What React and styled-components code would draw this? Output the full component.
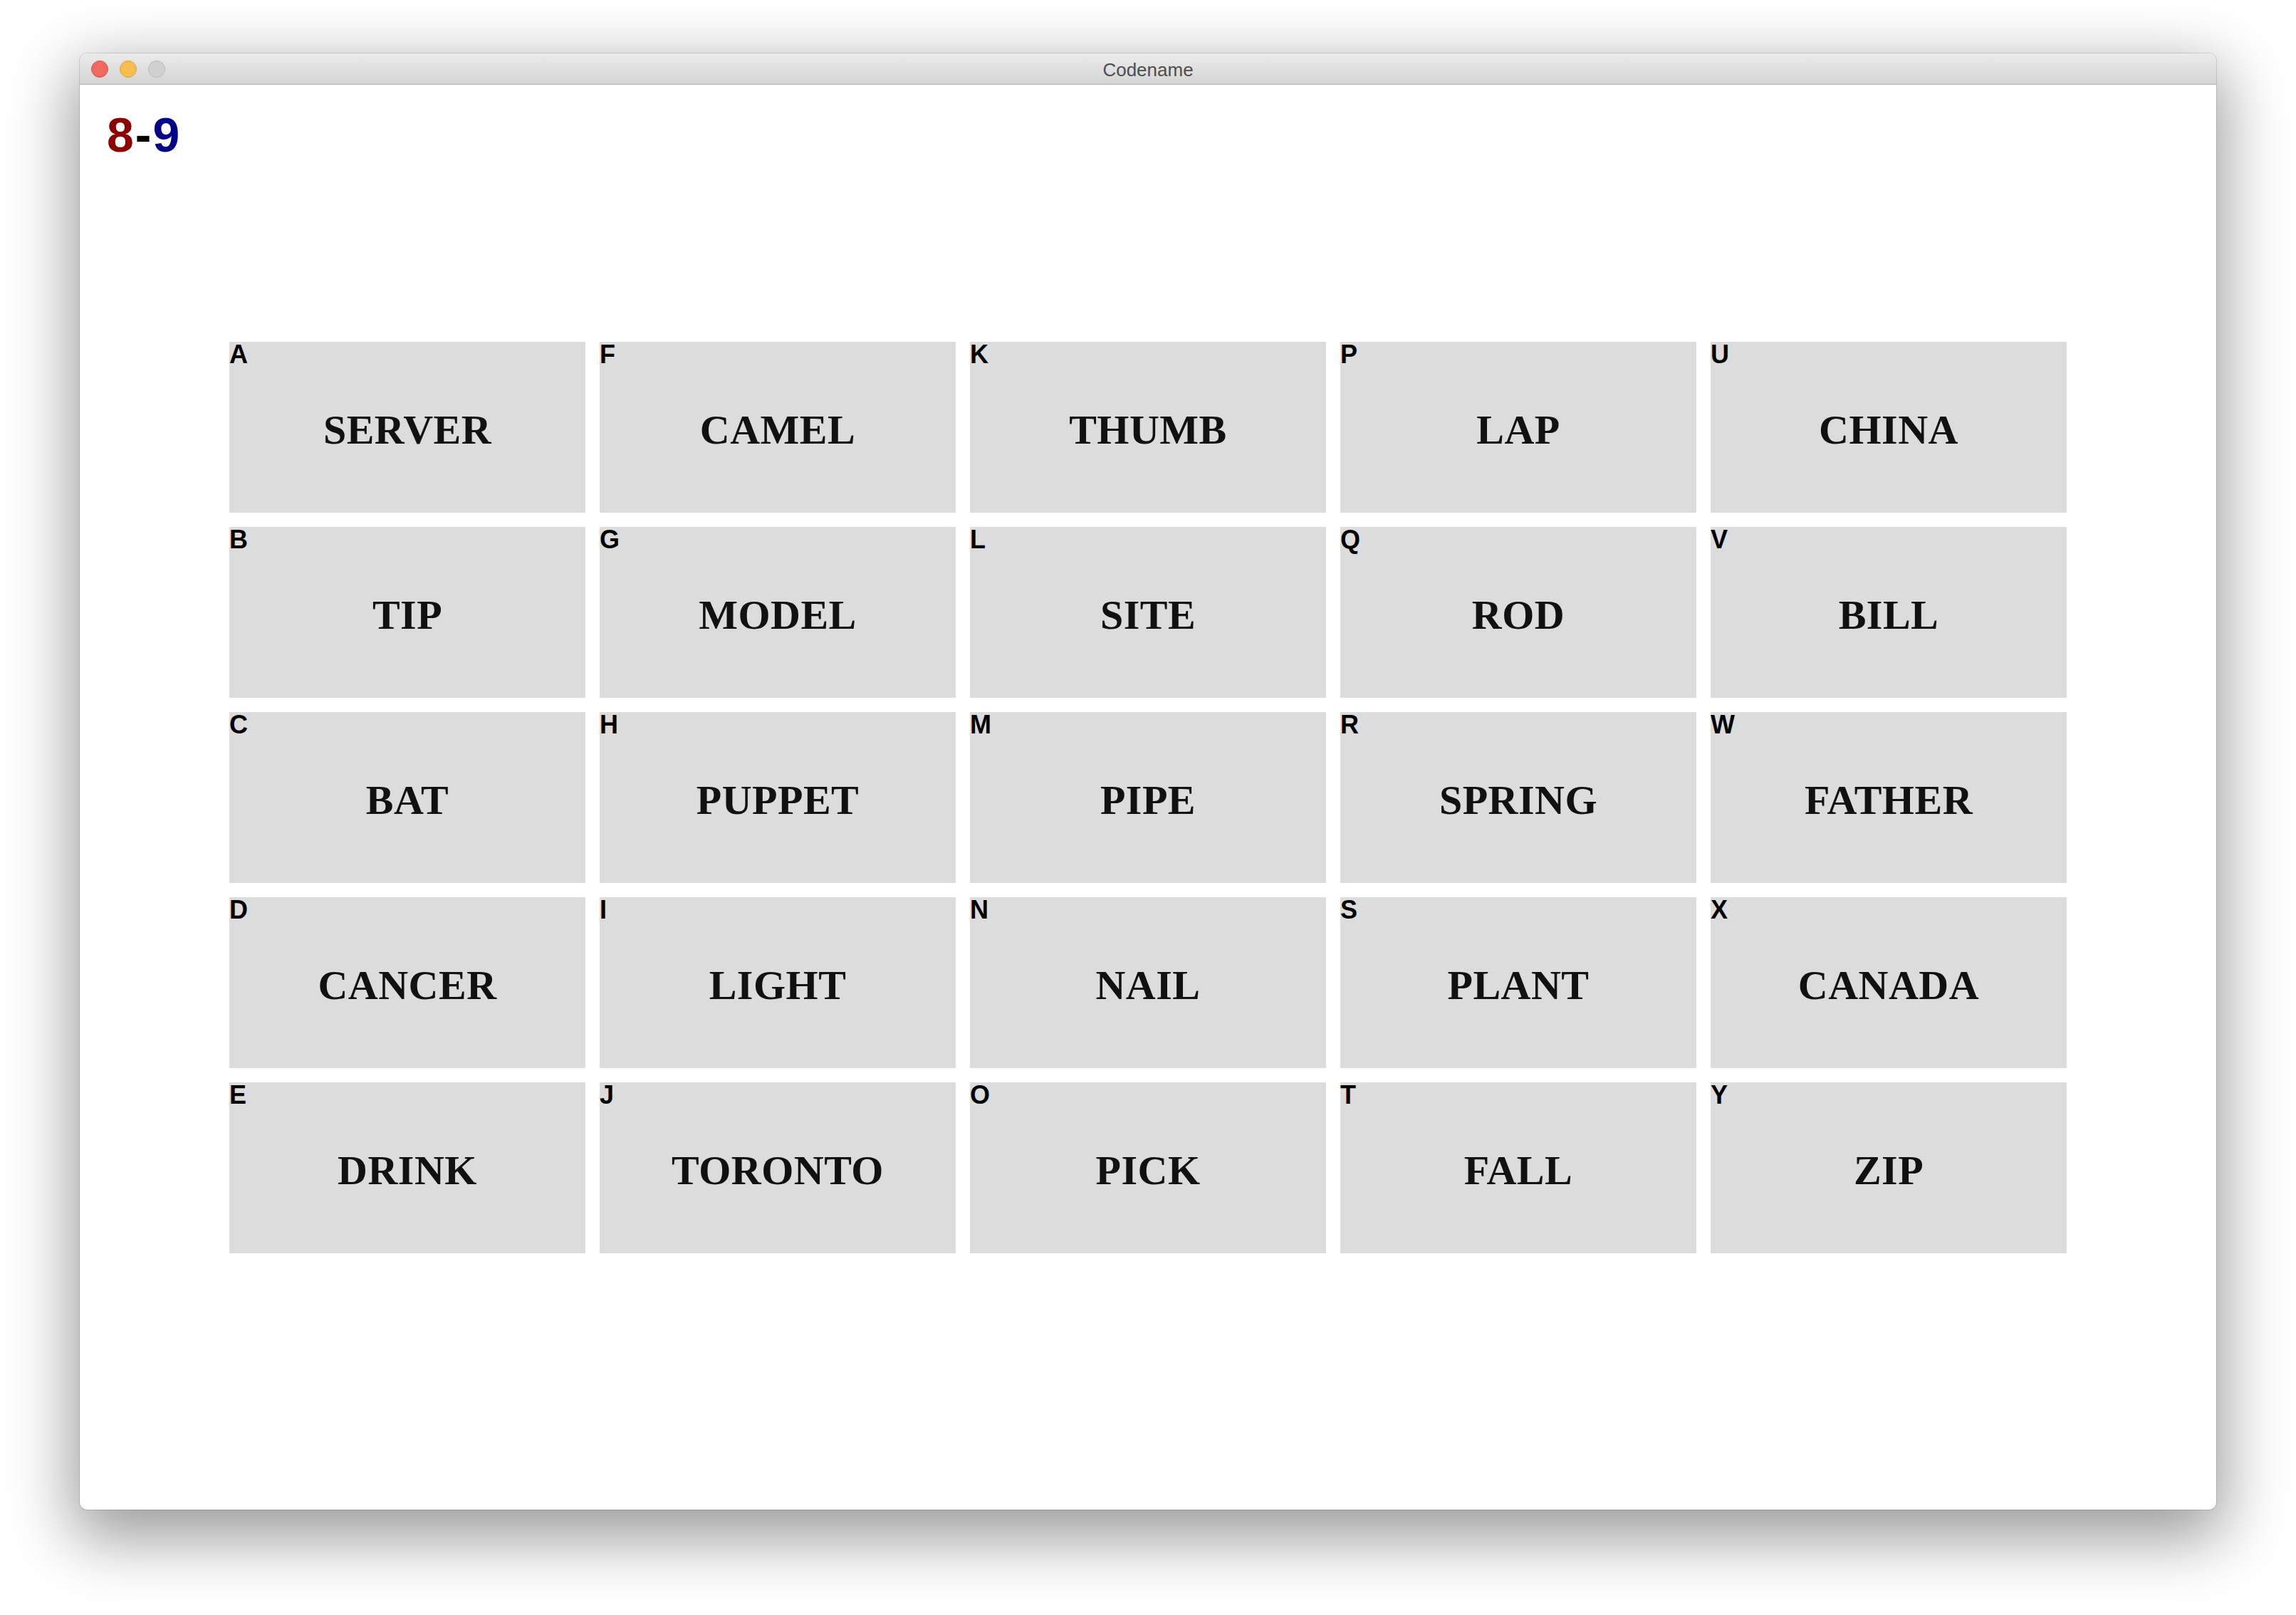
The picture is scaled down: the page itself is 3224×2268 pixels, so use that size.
import React from 'react';
import styled, { createGlobalStyle } from 'styled-components';

const words = [
	['A', 'SERVER'], ['B', 'TIP'], ['C', 'BAT'], ['D', 'CANCER'], ['E', 'DRINK'],
	['F', 'CAMEL'], ['G', 'MODEL'], ['H', 'PUPPET'], ['I', 'LIGHT'], ['J', 'TORONTO'],
	['K', 'THUMB'], ['L', 'SITE'], ['M', 'PIPE'], ['N', 'NAIL'], ['O', 'PICK'],
	['P', 'LAP'], ['Q', 'ROD'], ['R', 'SPRING'], ['S', 'PLANT'], ['T', 'FALL'],
	['U', 'CHINA'], ['V', 'BILL'], ['W', 'FATHER'], ['X', 'CANADA'], ['Y', 'ZIP'],
];

const GlobalStyle = createGlobalStyle`
	html, body {
		margin: 0;
		padding: 0;
		background: #ffffff;
	}
	* {
		box-sizing: border-box;
	}
`;

const App = () => {
	return (
		<>
			<GlobalStyle />
			<Desktop>
				<Window>
					<TitleBar>
						<Lights>
							<Light color="#ee6a5f" edge="#d5544a" />
							<Light color="#f6be4f" edge="#d9a33c" />
							<Light color="#d0d0d0" edge="#b9b9b9" />
						</Lights>
						<Title>Codename</Title>
					</TitleBar>
					<Content>
						<Score>
							<Team color="#8b0000">8</Team>
							<Dash>-</Dash>
							<Team color="#000088">9</Team>
						</Score>
						<Board>
							{words.map(([letter, word]) => (
								<Card key={letter}>
									<Letter>{letter}</Letter>
									<Word>{word}</Word>
								</Card>
							))}
						</Board>
					</Content>
				</Window>
			</Desktop>
		</>
	);
};

export default App;

const Desktop = styled.div`
	width: 3224px;
	height: 2268px;
	padding: 75px 0 0 112px;
	background: #ffffff;
	overflow: hidden;
`;

const Window = styled.div`
	width: 3000px;
	height: 2045px;
	display: flex;
	flex-direction: column;
	background: #ffffff;
	border-radius: 10px;
	overflow: hidden;
	box-shadow: 0 0 0 1px rgba(0, 0, 0, 0.12), 0 30px 90px 10px rgba(0, 0, 0, 0.4);
`;

const TitleBar = styled.div`
	position: relative;
	height: 44px;
	flex: none;
	display: flex;
	align-items: center;
	justify-content: center;
	padding-top: 3px;
	background: linear-gradient(#ebebeb, #d5d5d5);
	border-bottom: 1px solid #b4b4b4;
`;

const Lights = styled.div`
	position: absolute;
	left: 16px;
	top: 10px;
	display: flex;
	gap: 16px;
`;

const Light = styled.span`
	width: 24px;
	height: 24px;
	border-radius: 50%;
	background: ${({ color }) => color};
	border: 1px solid ${({ edge }) => edge};
`;

const Title = styled.div`
	font-family: 'Liberation Sans', Arial, sans-serif;
	font-size: 26px;
	color: #4d4d4d;
`;

const Content = styled.div`
	flex: 1;
	display: grid;
	grid-template-rows: 1fr auto 1fr;
`;

const Score = styled.div`
	align-self: start;
	justify-self: start;
	padding: 36px 38px;
	font-family: 'Liberation Sans', Arial, sans-serif;
	font-weight: 700;
	font-size: 68px;
	line-height: 1;
	letter-spacing: 2px;
`;

const Team = styled.span`
	color: ${({ color }) => color};
`;

const Dash = styled.span`
	color: #000000;
`;

const Board = styled.div`
	justify-self: center;
	display: grid;
	grid-template-columns: repeat(5, 500px);
	grid-template-rows: repeat(5, 240px);
	grid-auto-flow: column;
	gap: 20px;
`;

const Card = styled.div`
	display: grid;
	background: #dcdcdc;
	color: #000000;
`;

const Letter = styled.div`
	grid-area: 1 / 1;
	align-self: start;
	justify-self: start;
	font-family: 'Liberation Sans', Arial, sans-serif;
	font-weight: 700;
	font-size: 36px;
	line-height: 1;
`;

const Word = styled.div`
	grid-area: 1 / 1;
	place-self: center;
	font-family: 'Liberation Serif', 'Times New Roman', serif;
	font-weight: 700;
	font-size: 58px;
	letter-spacing: 0.5px;
	line-height: 1;
	margin-top: 8px;
	color: #111111;
`;
